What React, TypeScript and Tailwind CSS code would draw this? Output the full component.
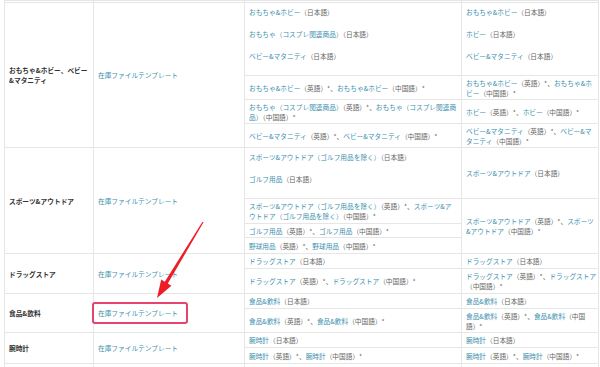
import type { ReactNode } from 'react'

const L = ({ children }: { children: ReactNode }) => (
  <span className="text-[#3d8fae]">{children}</span>
)

const cell = 'border border-[#e6e6e6] px-[4px] py-0 align-middle leading-[10px] whitespace-nowrap overflow-hidden'
const head = `${cell} font-bold text-[#333]`
const tmpl = `${cell}`

function Items({ items }: { items: ReactNode[] }) {
  return (
    <div className="pt-[4px] pb-[2px]">
      {items.map((it, i) => (
        <p key={i} className="mb-[12px] leading-[10px]">
          {it}
        </p>
      ))}
    </div>
  )
}

export default function App() {
  return (
    <div
      className="relative w-[600px] h-[367px] overflow-hidden bg-white text-[6.7px] text-[#666]"
      style={{ fontFamily: '"Noto Sans CJK JP", "Noto Sans", sans-serif' }}
    >
      <table className="ml-[4px] w-[594px] table-fixed border-collapse">
        <colgroup>
          <col className="w-[89px]" />
          <col className="w-[151px]" />
          <col className="w-[217px]" />
          <col className="w-[137px]" />
        </colgroup>
        <tbody>
          <tr className="h-[2px]">
            <td className="border border-[#e6e6e6] p-0" />
            <td className="border border-[#e6e6e6] p-0" />
            <td className="border border-[#e6e6e6] p-0" />
            <td className="border border-[#e6e6e6] p-0" />
          </tr>

          {/* おもちゃ&ホビー */}
          <tr className="h-[72px]">
            <td rowSpan={4} className={head}>
              おもちゃ&ホビー、ベビー
              <br />
              &マタニティ
            </td>
            <td rowSpan={4} className={tmpl}>
              <L>在庫ファイルテンプレート</L>
            </td>
            <td className={`${cell} !align-top`}>
              <Items
                items={[
                  <><L>おもちゃ&ホビー</L>（日本語）</>,
                  <><L>おもちゃ（コスプレ関連商品）</L>（日本語）</>,
                  <><L>ベビー&マタニティ</L>（日本語）</>,
                ]}
              />
            </td>
            <td className={`${cell} !align-top`}>
              <Items
                items={[
                  <><L>おもちゃ&ホビー</L>（日本語）</>,
                  <><L>ホビー</L>（日本語）</>,
                  <><L>ベビー&マタニティ</L>（日本語）</>,
                ]}
              />
            </td>
          </tr>
          <tr className="h-[24px]">
            <td className={cell}>
              <L>おもちゃ&ホビー</L>（英語）*、<L>おもちゃ&ホビー</L>（中国語）*
            </td>
            <td className={cell}>
              <L>おもちゃ&ホビー</L>（英語）*、<L>おもちゃ&ホ<br />ビー</L>（中国語）*
            </td>
          </tr>
          <tr className="h-[24px]">
            <td className={cell}>
              <L>おもちゃ（コスプレ関連商品）</L>（英語）*、<L>おもちゃ（コスプレ関連商<br />品）</L>（中国語）*
            </td>
            <td className={cell}>
              <L>ホビー</L>（英語）*、<L>ホビー</L>（中国語）*
            </td>
          </tr>
          <tr className="h-[24px]">
            <td className={cell}>
              <L>ベビー&マタニティ</L>（英語）*、<L>ベビー&マタニティ</L>（中国語）*
            </td>
            <td className={cell}>
              <L>ベビー&マタニティ</L>（英語）*、<L>ベビー&マ<br />タニティ</L>（中国語）*
            </td>
          </tr>

          {/* スポーツ&アウトドア */}
          <tr className="h-[51px]">
            <td rowSpan={4} className={head}>
              スポーツ&アウトドア
            </td>
            <td rowSpan={4} className={tmpl}>
              <L>在庫ファイルテンプレート</L>
            </td>
            <td className={`${cell} !align-top`}>
              <Items
                items={[
                  <><L>スポーツ&アウトドア（ゴルフ用品を除く）</L>（日本語）</>,
                  <><L>ゴルフ用品</L>（日本語）</>,
                ]}
              />
            </td>
            <td className={cell}>
              <L>スポーツ&アウトドア</L>（日本語）
            </td>
          </tr>
          <tr className="h-[25px]">
            <td className={cell}>
              <L>スポーツ&アウトドア（ゴルフ用品を除く）</L>（英語）*、<L>スポーツ&ア<br />ウトドア（ゴルフ用品を除く）</L>（中国語）*
            </td>
            <td rowSpan={3} className={cell}>
              <L>スポーツ&アウトドア</L>（英語）*、<L>スポーツ<br />&アウトドア</L>（中国語）*
            </td>
          </tr>
          <tr className="h-[14px]">
            <td className={cell}>
              <L>ゴルフ用品</L>（英語）*、<L>ゴルフ用品</L>（中国語）*
            </td>
          </tr>
          <tr className="h-[16px]">
            <td className={cell}>
              <L>野球用品</L>（英語）*、<L>野球用品</L>（中国語）*
            </td>
          </tr>

          {/* ドラッグストア */}
          <tr className="h-[15px]">
            <td rowSpan={2} className={head}>
              ドラッグストア
            </td>
            <td rowSpan={2} className={tmpl}>
              <L>在庫ファイルテンプレート</L>
            </td>
            <td className={cell}>
              <L>ドラッグストア</L>（日本語）
            </td>
            <td className={cell}>
              <L>ドラッグストア</L>（日本語）
            </td>
          </tr>
          <tr className="h-[25px]">
            <td className={cell}>
              <L>ドラッグストア</L>（英語）*、<L>ドラッグストア</L>（中国語）*
            </td>
            <td className={cell}>
              <L>ドラッグストア</L>（英語）*、<L>ドラッグストア</L>
              <br />
              （中国語）*
            </td>
          </tr>

          {/* 食品&飲料 */}
          <tr className="h-[15px]">
            <td rowSpan={2} className={head}>
              食品&飲料
            </td>
            <td rowSpan={2} className={tmpl}>
              <L>在庫ファイルテンプレート</L>
            </td>
            <td className={cell}>
              <L>食品&飲料</L>（日本語）
            </td>
            <td className={cell}>
              <L>食品&飲料</L>（日本語）
            </td>
          </tr>
          <tr className="h-[24px]">
            <td className={cell}>
              <L>食品&飲料</L>（英語）*、<L>食品&飲料</L>（中国語）*
            </td>
            <td className={cell}>
              <L>食品&飲料</L>（英語）*、<L>食品&飲料</L>（中国
              <br />
              語）*
            </td>
          </tr>

          {/* 腕時計 */}
          <tr className="h-[15px]">
            <td rowSpan={2} className={head}>
              腕時計
            </td>
            <td rowSpan={2} className={tmpl}>
              <L>在庫ファイルテンプレート</L>
            </td>
            <td className={cell}>
              <L>腕時計</L>（日本語）
            </td>
            <td className={cell}>
              <L>腕時計</L>（日本語）
            </td>
          </tr>
          <tr className="h-[16px]">
            <td className={cell}>
              <L>腕時計</L>（英語）*、<L>腕時計</L>（中国語）*
            </td>
            <td className={cell}>
              <L>腕時計</L>（英語）*、<L>腕時計</L>（中国語）*
            </td>
          </tr>

          <tr className="h-[20px]">
            <td className={cell} />
            <td className={cell} />
            <td className={cell} />
            <td className={cell} />
          </tr>
        </tbody>
      </table>

      {/* highlight box */}
      <div className="absolute left-[92px] top-[302px] w-[96px] h-[22px] rounded-[3px] border-2 border-[#e8426e]" />

      {/* red arrow */}
      <svg className="absolute left-0 top-0" width="600" height="367" viewBox="0 0 600 367">
        <polygon
          fill="#ee1c25"
          points="203.5,222.3 167.8,283.5 171.4,285.7 157,298 161.2,279.5 164.8,281.7 202.5,221.7"
        />
      </svg>
    </div>
  )
}
